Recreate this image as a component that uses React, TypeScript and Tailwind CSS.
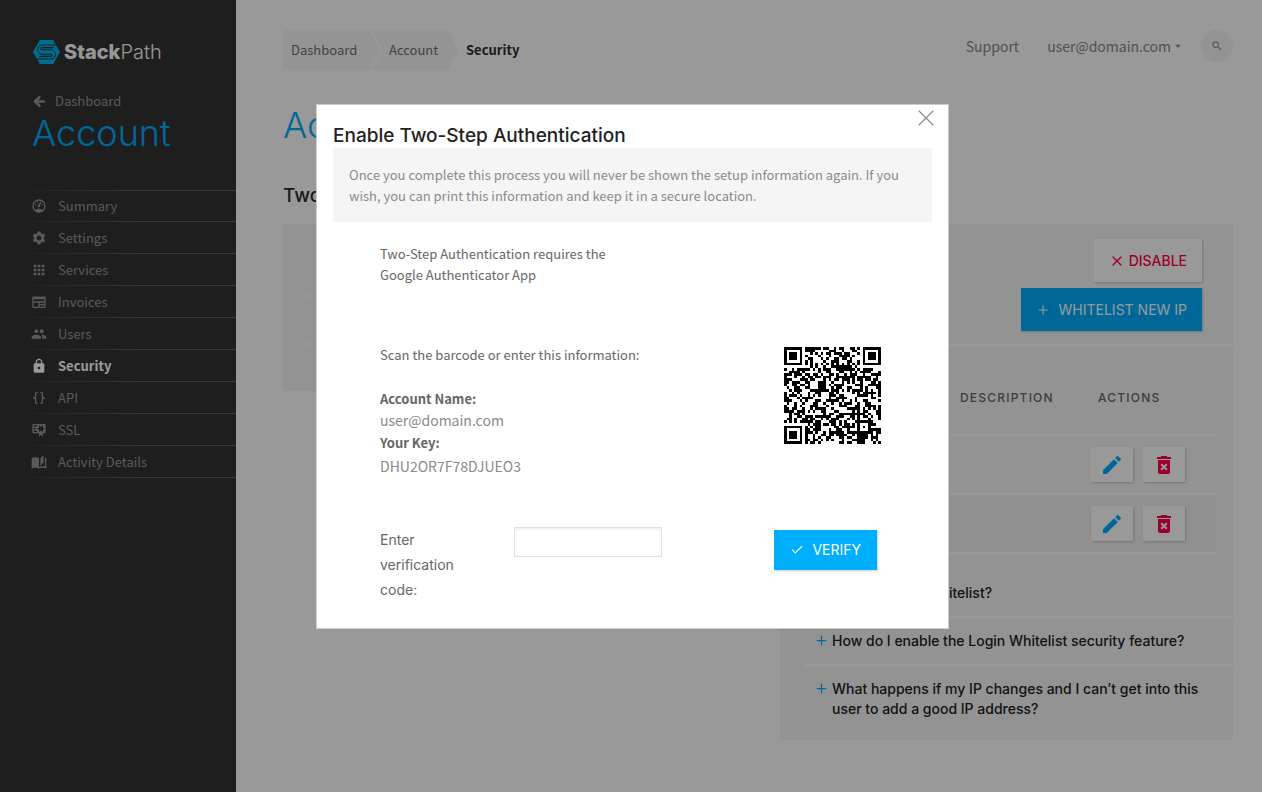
import type { ReactNode } from "react";
import { MdApps, MdArrowDropDown, MdDeleteForever, MdEdit, MdLock, MdPeople, MdSearch, MdSettings } from "react-icons/md";
import { ArrowLeft, Check, Plus, X } from "lucide-react";

const sans = "font-['Noto_Sans_CJK_SC',sans-serif]";
const display = "font-['Inter',sans-serif]";

function Glyph({ d }: { d: string }) {
  return (
    <svg viewBox="0 0 24 24" className="h-full w-full" fill="currentColor" aria-hidden="true">
      <path d={d} />
    </svg>
  );
}

const gauge =
  "M17.3,18C19,16.5 20,14.4 20,12A8,8 0 0,0 12,4A8,8 0 0,0 4,12C4,14.4 5,16.5 6.7,18C8.2,16.7 10,16 12,16C14,16 15.9,16.7 17.3,18M12,2A10,10 0 0,1 22,12A10,10 0 0,1 12,22A10,10 0 0,1 2,12A10,10 0 0,1 12,2M7,9A1,1 0 0,1 8,10A1,1 0 0,1 7,11A1,1 0 0,1 6,10A1,1 0 0,1 7,9M10,6A1,1 0 0,1 11,7A1,1 0 0,1 10,8A1,1 0 0,1 9,7A1,1 0 0,1 10,6M17,9A1,1 0 0,1 18,10A1,1 0 0,1 17,11A1,1 0 0,1 16,10A1,1 0 0,1 17,9M14.4,6.1C14.9,6.3 15.1,6.9 15,7.4L13.6,10.8C13.8,11.1 14,11.5 14,12A2,2 0 0,1 12,14A2,2 0 0,1 10,12C10,11 10.7,10.1 11.7,10L13.1,6.7C13.3,6.1 13.9,5.9 14.4,6.1Z";
const invoice =
  "M20,11H4V8H20M20,15H13V13H20M20,19H13V17H20M11,19H4V13H11M20.33,4.67L18.67,3L17,4.67L15.33,3L13.67,4.67L12,3L10.33,4.67L8.67,3L7,4.67L5.33,3L3.67,4.67L2,3V19A2,2 0 0,0 4,21H20A2,2 0 0,0 22,19V3L20.33,4.67Z";
const braces =
  "M8,3A2,2 0 0,0 6,5V9A2,2 0 0,1 4,11H3V13H4A2,2 0 0,1 6,15V19A2,2 0 0,0 8,21H10V19H8V14A2,2 0 0,0 6,12A2,2 0 0,0 8,10V5H10V3M16,3A2,2 0 0,1 18,5V9A2,2 0 0,0 20,11H21V13H20A2,2 0 0,0 18,15V19A2,2 0 0,1 16,21H14V19H16V14A2,2 0 0,1 18,12A2,2 0 0,1 16,10V5H14V3H16Z";
const certificate =
  "M4,3C2.89,3 2,3.89 2,5V15A2,2 0 0,0 4,17H12V22L15,19L18,22V17H20A2,2 0 0,0 22,15V5A2,2 0 0,0 20,3H4M12,5L15,7L18,5V8.5L21,10L18,11.5V15L15,13L12,15V11.5L9,10L12,8.5V5M4,5H9V7H4V5M4,9H7V11H4V9M4,13H9V15H4V13Z";
const book =
  "M19,2L14,6.5V17.5L19,13V2M6.5,5C4.55,5 2.45,5.4 1,6.5V21.16C1,21.41 1.25,21.66 1.5,21.66C1.6,21.66 1.65,21.59 1.75,21.59C3.1,20.94 5.05,20.5 6.5,20.5C8.45,20.5 10.55,20.9 12,22C13.35,21.15 15.8,20.5 17.5,20.5C19.15,20.5 20.85,20.81 22.25,21.56C22.35,21.61 22.4,21.59 22.5,21.59C22.75,21.59 23,21.34 23,21.09V6.5C22.4,6.05 21.75,5.75 21,5.5V19C19.9,18.65 18.7,18.5 17.5,18.5C15.8,18.5 13.35,19.15 12,20V6.5C10.55,5.4 8.45,5 6.5,5Z";

const navItems: { label: string; icon: ReactNode; current?: boolean }[] = [
  { label: "Summary", icon: <Glyph d={gauge} /> },
  { label: "Settings", icon: <MdSettings className="h-full w-full" /> },
  { label: "Services", icon: <MdApps className="h-full w-full" /> },
  { label: "Invoices", icon: <Glyph d={invoice} /> },
  { label: "Users", icon: <MdPeople className="h-full w-full" /> },
  { label: "Security", icon: <MdLock className="h-full w-full" />, current: true },
  { label: "API", icon: <Glyph d={braces} /> },
  { label: "SSL", icon: <Glyph d={certificate} /> },
  { label: "Activity Details", icon: <Glyph d={book} /> },
];

function Rule() {
  return <div className="h-px bg-linear-to-r from-transparent to-[#626262] to-60%" />;
}

function Logo() {
  return (
    <svg viewBox="0 0 27 24" className="h-6 w-[27px]" aria-hidden="true">
      <path d="M6.8 0H20.2L27 12L20.2 24H6.8L0 12Z" fill="#00b4ee" />
      <path
        d="M25 5H9.2a4.6 4.6 0 0 0 0 9.2H18a1 1 0 0 1 0 2.2H6.5M2 19H17.8a4.6 4.6 0 0 0 0-9.2H9a1 1 0 0 1 0-2.2H20.5"
        fill="none"
        stroke="#333333"
        strokeWidth="1.1"
      />
    </svg>
  );
}

function Sidebar() {
  return (
    <aside className="w-[236px] shrink-0 bg-[#333333] text-[#969696]">
      <a href="#home" className="mt-[38px] ml-[33px] flex h-7 items-center gap-1 text-[#fafafa]">
        <Logo />
        <span className={`${display} text-xl`}>
          <span className="font-extrabold">Stack</span>
          <span className="font-light">Path</span>
        </span>
      </a>
      <a href="#dashboard" className="mt-[25px] ml-8 flex h-5 items-center gap-2 text-[13px]">
        <ArrowLeft className="h-[15px] w-[15px]" strokeWidth={4} />
        Dashboard
      </a>
      <h2 className={`${display} mt-[2px] ml-8 text-[36px] leading-[40px] font-light text-[#00aeff]`}>Account</h2>
      <nav className="mt-[37px] ml-3">
        <ul>
          {navItems.map((item, i) => (
            <li key={item.label} className="flex h-8 flex-col">
              {i === 0 && <Rule />}
              <a
                href={`#${item.label}`}
                className={`flex min-h-0 flex-1 items-center gap-[11px] pl-[19px] text-[13px] ${item.current ? "font-bold text-white" : ""}`}
              >
                <span className="h-4 w-4">{item.icon}</span>
                {item.label}
              </a>
              <Rule />
            </li>
          ))}
        </ul>
      </nav>
    </aside>
  );
}

function TopBar() {
  return (
    <header className="flex items-start justify-between">
      <nav className="flex h-10 items-center text-[13px] text-[#707070]">
        <a href="#dashboard" className="flex h-10 w-[97px] items-center bg-[#f7f7f7] pl-2 [clip-path:polygon(0_0,87px_0,100%_50%,87px_100%,0_100%)]">
          Dashboard
        </a>
        <a href="#account" className="-ml-2 flex h-10 w-[86px] items-center bg-[#f7f7f7] pl-[17px] [clip-path:polygon(0_0,76px_0,100%_50%,76px_100%,0_100%,10px_50%)]">
          Account
        </a>
        <span className="ml-2 font-bold text-[#2c2c2c]">Security</span>
      </nav>
      <div className="flex h-8 items-center text-sm text-[#888888]">
        <a href="#support">Support</a>
        <button type="button" className="ml-7 flex items-center">
          user@domain.com
          <MdArrowDropDown className="h-[14px] w-[14px]" />
        </button>
        <button type="button" aria-label="Search" className="ml-4 flex h-8 w-8 items-center justify-center rounded-full bg-[#f5f5f5]">
          <MdSearch className="h-3 w-3" />
        </button>
      </div>
    </header>
  );
}

function ActionButtons() {
  const box = "flex h-[35px] w-[42px] items-center justify-center bg-white shadow-[1px_1px_2px_rgba(0,0,0,0.2)]";
  return (
    <div className="flex gap-[10px] pl-px">
      <button type="button" aria-label="Edit" className={`${box} text-[#00aeff]`}>
        <MdEdit className="h-6 w-6" />
      </button>
      <button type="button" aria-label="Delete" className={`${box} text-[#ff0048]`}>
        <MdDeleteForever className="h-6 w-6" />
      </button>
    </div>
  );
}

const questions = [
  "What is Login Whitelist?",
  "How do I enable the Login Whitelist security feature?",
  "What happens if my IP changes and I can’t get into this user to add a good IP address?",
];

function WhitelistPanel() {
  return (
    <section className={`${display} bg-[#f5f5f5]`}>
      <div className="flex flex-col items-end gap-[6px] border-b-2 border-white px-[31px] pt-[15px] pb-[13px] text-sm">
        <button type="button" className="flex h-[43px] items-center gap-1 bg-white px-[15px] font-medium text-[#ff0048] shadow-[1px_1px_2px_rgba(0,0,0,0.2)]">
          <X className="h-4 w-4" strokeWidth={2} />
          DISABLE
        </button>
        <button type="button" className="flex h-[43px] items-center gap-[9px] bg-[#00aeff] px-[15px] text-white shadow-[1px_1px_2px_rgba(0,0,0,0.2)]">
          <Plus className="h-[14px] w-[14px]" strokeWidth={2} />
          WHITELIST NEW IP
        </button>
      </div>
      <div className="pr-[17px] pl-6">
        <table className="w-full table-fixed text-left text-xs text-[#666666]">
          <thead>
            <tr className="h-[89px] border-b-2 border-white tracking-widest">
              <th className="w-[101px]" />
              <th className="w-[55px] pt-4 font-medium">NAME</th>
              <th className="w-[130px] pt-4 font-medium">DESCRIPTION</th>
              <th className="pt-4 pl-2 font-medium">ACTIONS</th>
            </tr>
          </thead>
          <tbody>
            {[0, 1].map((row) => (
              <tr key={row} className="h-[59px] border-b-2 border-white even:bg-[#f0f0f0]">
                <td />
                <td />
                <td />
                <td>
                  <ActionButtons />
                </td>
              </tr>
            ))}
          </tbody>
        </table>
      </div>
      <ul className="mt-4 pb-2 pl-6 text-sm leading-5 font-medium text-[#222222]">
        {questions.map((q) => (
          <li key={q} className="border-b-2 border-white py-[13px] pr-4 pl-[10px] last:border-b-0">
            <button type="button" className="flex gap-[3px] text-left">
              <Plus className="mt-[2px] h-[15px] w-[15px] shrink-0 text-[#00aeff]" />
              {q}
            </button>
          </li>
        ))}
      </ul>
    </section>
  );
}

const N = 37;

function qrModules(): string {
  let seed = 20731;
  const next = () => {
    seed = (seed * 1103515245 + 12345) % 2147483648;
    return seed / 2147483648;
  };
  const finder = (r: number, c: number) => {
    if (r > 7 || c > 7) return null;
    const m = Math.max(Math.abs(r - 3), Math.abs(c - 3));
    return m === 3 || m <= 1;
  };
  let path = "";
  for (let r = 0; r < N; r++) {
    for (let c = 0; c < N; c++) {
      const noise = next() < 0.52;
      const corner = finder(r, c) ?? finder(r, N - 1 - c) ?? finder(N - 1 - r, c);
      const align = Math.max(Math.abs(r - 30), Math.abs(c - 30));
      let on = noise;
      if (corner !== null) on = corner;
      else if (align <= 2) on = align !== 1;
      else if (r === 6 || c === 6) on = (r + c) % 2 === 0;
      if (on) path += `M${c} ${r}h1v1h-1z`;
    }
  }
  return path;
}

function TwoStepDialog() {
  return (
    <div className="fixed inset-0 flex items-start justify-center bg-black/40 pt-[104px] pl-[3px]">
      <section role="dialog" aria-label="Enable Two-Step Authentication" className="relative w-[633px] border border-[#cccccc] bg-white px-4 pt-[18px] pb-[26px] text-[13px] text-[#666666]">
        <button type="button" aria-label="Close" className="absolute -top-px right-2 text-[#888888]">
          <X className="h-7 w-7" strokeWidth={1} />
        </button>
        <h1 className={`${display} text-[19px] leading-[25px] font-medium text-[#222222]`}>Enable Two-Step Authentication</h1>
        <p className="bg-[#f5f5f5] p-4 leading-[21px] text-[#8a8a8a]">
          Once you complete this process you will never be shown the setup information again. If you wish, you can print this information and keep it in a secure location.
        </p>
        <div className="pt-[21px] pr-[51px] pl-[47px]">
          <p className="w-[266px] leading-[21px]">Two-Step Authentication requires the Google Authenticator App</p>
          <div className="mt-[59px] flex justify-between">
            <div className="leading-[22px]">
              <p>Scan the barcode or enter this information:</p>
              <dl className="mt-[22px]">
                <dt className="font-bold">Account Name:</dt>
                <dd className="text-sm leading-5 text-[#8a8a8a]">user@domain.com</dd>
                <dt className="pt-[2px] font-bold">Your Key:</dt>
                <dd className="text-sm leading-6 text-[#8a8a8a]">DHU2OR7F78DJUEO3</dd>
              </dl>
            </div>
            <svg viewBox={`0 0 ${N} ${N}`} className="mt-[3px] h-[97px] w-[97px]" shapeRendering="crispEdges" role="img" aria-label="QR code">
              <path d={qrModules()} fill="#000000" />
            </svg>
          </div>
          <form className="mt-[49px] flex items-start pr-1 text-sm" onSubmit={(e) => e.preventDefault()}>
            <label htmlFor="code" className={`${display} w-[134px] pr-12 leading-[25px]`}>
              Enter verification code:
            </label>
            <input id="code" type="text" className="h-[30px] w-[148px] border border-[#e0e0e0] bg-white px-2 shadow-[inset_0_2px_2px_rgba(0,0,0,0.06)] outline-none" />
            <button type="submit" className={`${display} mt-[3px] ml-auto flex h-10 items-center gap-2 bg-[#00aeff] px-4 text-white shadow-[1px_1px_2px_rgba(0,0,0,0.2)]`}>
              <Check className="h-[14px] w-[14px]" strokeWidth={2} />
              VERIFY
            </button>
          </form>
        </div>
      </section>
    </div>
  );
}

export default function App() {
  return (
    <div className={`${sans} flex min-h-screen bg-white`}>
      <Sidebar />
      <main className="min-w-0 flex-1 pt-[30px] pr-[29px] pb-[51px] pl-[47px]">
        <TopBar />
        <h1 className={`${display} mt-[35px] text-[36px] leading-[40px] font-light text-[#00aeff]`}>Account</h1>
        <div className="mt-[38px] grid grid-cols-[473fr_453fr] items-start gap-6">
          <div>
            <h2 className={`${display} text-[19px] leading-[25px] font-medium text-[#2b2b2b]`}>Two-Step Authentication</h2>
            <ul className="mt-4 bg-[#f5f5f5] pt-6 pb-[46px] pl-6">
              <li className="h-[49px] border-b-2 border-white" />
              <li className="h-12 border-b-2 border-white" />
            </ul>
          </div>
          <div className="pt-[41px]">
            <WhitelistPanel />
          </div>
        </div>
      </main>
      <TwoStepDialog />
    </div>
  );
}
